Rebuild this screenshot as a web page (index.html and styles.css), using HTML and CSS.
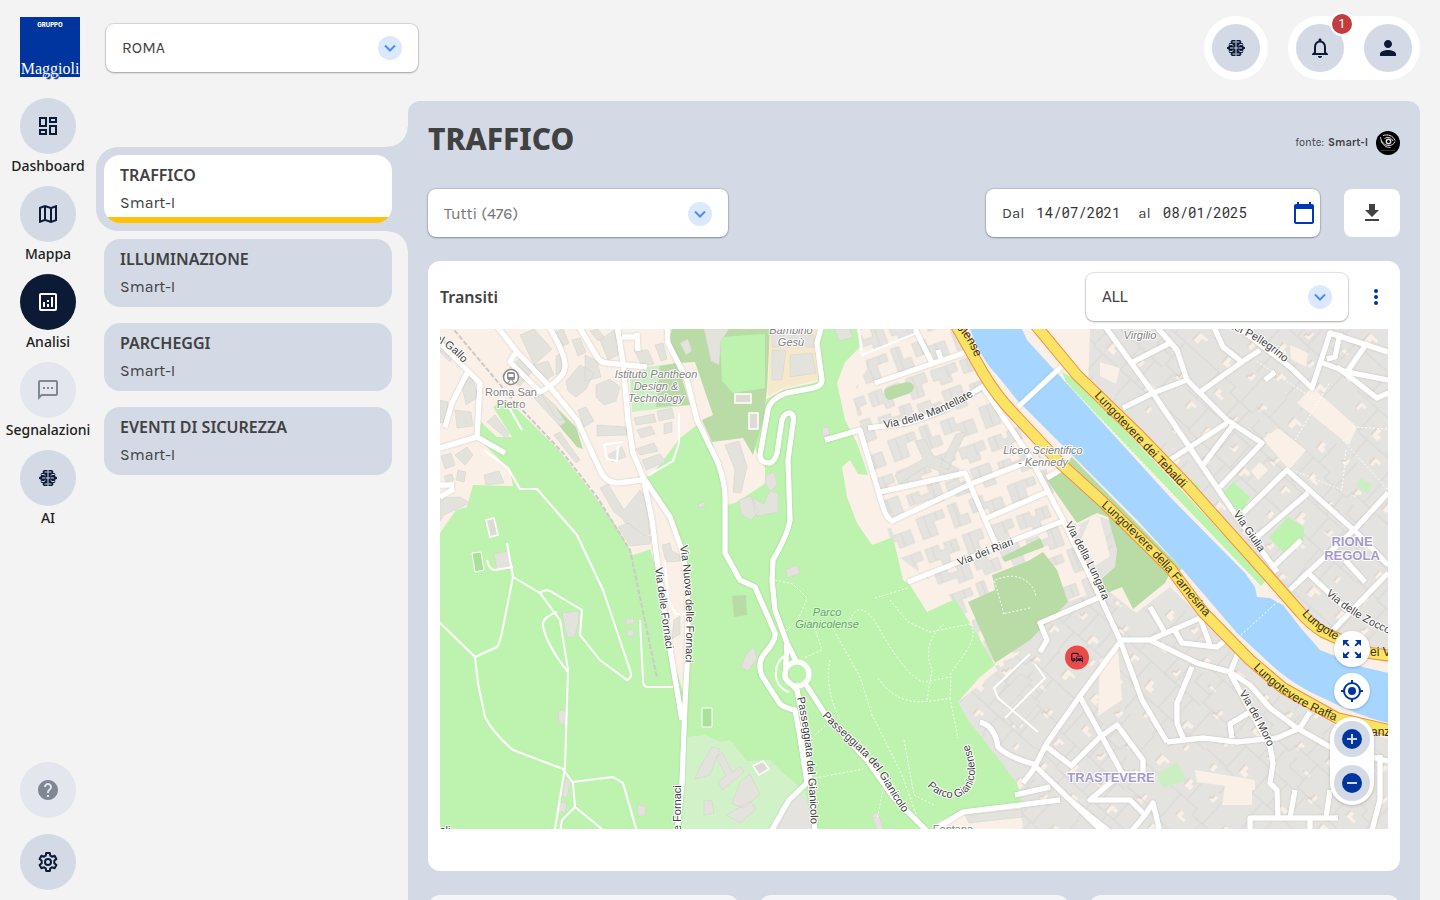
FILE: index.html
```html
<!DOCTYPE html>
<html lang="it">
<head>
<meta charset="utf-8">
<meta name="viewport" content="width=device-width, initial-scale=1">
<title>Traffico</title>
<link rel="stylesheet" href="styles.css">
</head>
<body>
<svg class="defs" aria-hidden="true">
  <symbol id="i-brain" viewBox="0 0 24 24">
    <path fill="currentColor" d="M11.500 4H8L6.500 5.500 7 7H5.500L4.500 9l.8 1L3 11.300v1.400L5.300 14l-.8 1 1 2H7l-.5 1.500L8 20h3.500zM12.500 4H16l1.500 1.500L17 7h1.500l1 2-.8 1L21 11.300v1.400L18.700 14l.8 1-1 2H17l.5 1.500L16 20h-3.500z"/>
    <path class="brain-fold" d="M5.500 8.500h2.500l1.500 1.300M8.500 6h3M6 12h3.500M5.500 15.500h2.500l1.500-1.300M8.500 18h3M18.500 8.500H16l-1.500 1.300M15.500 6h-3M18 12h-3.500M18.500 15.500H16l-1.500-1.300M15.500 18h-3M10 12h4"/>
  </symbol>
  <symbol id="i-chevron" viewBox="0 0 24 24">
    <circle cx="12" cy="12" r="12" fill="#dce8fd"/>
    <path d="M7 9.500l5 5 5-5" fill="none" stroke="#4d8df6" stroke-width="2"/>
  </symbol>
</svg>

<div class="app">
  <aside class="rail">
    <a class="logo" href="#" aria-label="Gruppo Maggioli">
      <svg viewBox="0 0 60 64" width="60" height="64">
        <path fill="#0035a0" d="M0 1h60v60H0z"/>
        <circle cx="28.500" cy="60.500" r="3" fill="#0035a0" stroke="#f3f3f3" stroke-width=".6"/>
        <circle cx="36" cy="60.500" r="3" fill="#0035a0" stroke="#f3f3f3" stroke-width=".6"/>
        <text class="logo-small" x="30" y="11">GRUPPO</text>
        <text class="logo-name" x="30" y="58">Maggioli</text>
      </svg>
    </a>
    <nav class="nav">
      <a class="nav-item" href="#"><span class="disc"><svg viewBox="0 0 24 24"><path fill="currentColor" d="M19 5v2h-4V5h4M9 5v6H5V5h4m10 8v6h-4v-6h4M9 17v2H5v-2h4M21 3h-8v6h8V3zM11 3H3v10h8V3zm10 8h-8v10h8V11zm-10 4H3v6h8v-6z"/></svg></span>Dashboard</a>
      <a class="nav-item" href="#"><span class="disc"><svg viewBox="0 0 24 24"><path fill="currentColor" d="M20.500 3l-.16.03L15 5.100 9 3 3.360 4.900c-.21.070-.36.250-.36.480V20.500c0 .28.220.5.500.5l.16-.03L9 18.900l6 2.100 5.640-1.900c.21-.07.360-.25.360-.48V3.500c0-.28-.22-.5-.5-.5zM10 5.470l4 1.400v11.660l-4-1.400V5.470zm-5 .99l3-1.010v11.700l-3 1.160V6.460zm14 11.080l-3 1.010V6.860l3-1.160v11.840z"/></svg></span>Mappa</a>
      <a class="nav-item current" href="#" aria-current="page"><span class="disc"><svg viewBox="0 0 24 24"><path fill="currentColor" d="M19 3H5c-1.100 0-2 .9-2 2v14c0 1.100.9 2 2 2h14c1.100 0 2-.9 2-2V5c0-1.100-.9-2-2-2zm0 16H5V5h14v14zM7 12h2v5H7zM15 7h2v10h-2zM11 14h2v3h-2zM11 10h2v2h-2z"/></svg></span>Analisi</a>
      <a class="nav-item" href="#"><span class="disc dim"><svg viewBox="0 0 24 24"><path fill="currentColor" d="M20 2H4c-1.100 0-2 .9-2 2v18l4-4h14c1.100 0 2-.9 2-2V4c0-1.100-.9-2-2-2zm0 14H5.200L4 17.200V4h16v12zM7 9h2v2H7zM11 9h2v2h-2zM15 9h2v2h-2z"/></svg></span>Segnalazioni</a>
      <a class="nav-item" href="#"><span class="disc"><svg><use href="#i-brain"/></svg></span>AI</a>
    </nav>
    <div class="rail-foot">
      <button class="disc dim" aria-label="Aiuto"><svg viewBox="0 0 24 24"><path fill="currentColor" d="M12 2C6.480 2 2 6.480 2 12s4.480 10 10 10 10-4.480 10-10S17.520 2 12 2zm1 17h-2v-2h2v2zm2.070-7.750l-.9.920C13.450 12.900 13 13.500 13 15h-2v-.5c0-1.100.45-2.100 1.170-2.830l1.240-1.260c.37-.36.590-.86.590-1.410 0-1.100-.9-2-2-2s-2 .9-2 2H8c0-2.210 1.790-4 4-4s4 1.790 4 4c0 .88-.36 1.680-.93 2.250z"/></svg></button>
      <button class="disc" aria-label="Impostazioni"><svg viewBox="0 0 24 24" fill="none" stroke="currentColor" stroke-width="2" stroke-linejoin="round"><path d="M10.200 3h3.600l.5 2.700 1.700 1 2.600-.9 1.800 3.100-2.100 1.800v2.600l2.100 1.800-1.800 3.100-2.600-.9-1.700 1-.5 2.700h-3.600l-.5-2.700-1.700-1-2.600.9-1.800-3.100 2.100-1.800v-2.600L3.600 8.900l1.800-3.100 2.600.9 1.700-1z"/><circle cx="12" cy="12" r="3"/></svg></button>
    </div>
  </aside>

  <div class="page">
    <header class="topbar">
      <div class="select city"><select aria-label="Comune"><option>ROMA</option></select><svg><use href="#i-chevron"/></svg></div>
      <div class="tools">
        <div class="pill"><button class="disc tool" aria-label="AI"><svg><use href="#i-brain"/></svg></button></div>
        <div class="pill">
          <button class="disc tool" aria-label="Notifiche"><svg viewBox="0 0 24 24"><path fill="currentColor" d="M12 22c1.100 0 2-.9 2-2h-4c0 1.100.9 2 2 2zm6-6v-5c0-3.070-1.630-5.640-4.500-6.320V4c0-.83-.67-1.500-1.500-1.500s-1.500.67-1.500 1.500v.68C7.640 5.360 6 7.920 6 11v5l-2 2v1h16v-1l-2-2zm-2 1H8v-6c0-2.480 1.510-4.500 4-4.500s4 2.020 4 4.500v6z"/></svg><span class="badge">1</span></button>
          <button class="disc tool" aria-label="Profilo"><svg viewBox="0 0 24 24"><path fill="currentColor" d="M12 12c2.210 0 4-1.790 4-4s-1.790-4-4-4-4 1.790-4 4 1.790 4 4 4zm0 2c-2.670 0-8 1.340-8 4v2h16v-2c0-2.660-5.330-4-8-4z"/></svg></button>
        </div>
      </div>
    </header>

    <div class="body">
      <nav class="topics" aria-label="Analisi">
        <a class="topic active" href="#"><span class="topic-card"><b>TRAFFICO</b><span>Smart-I</span></span></a>
        <a class="topic" href="#"><span class="topic-card"><b>ILLUMINAZIONE</b><span>Smart-I</span></span></a>
        <a class="topic" href="#"><span class="topic-card"><b>PARCHEGGI</b><span>Smart-I</span></span></a>
        <a class="topic" href="#"><span class="topic-card"><b>EVENTI DI SICUREZZA</b><span>Smart-I</span></span></a>
      </nav>

      <main class="panel">
        <div class="title-row">
          <h1>TRAFFICO</h1>
          <p class="source">fonte: <b>Smart-I</b>
            <svg viewBox="0 0 24 24" width="24" height="24"><circle cx="12" cy="12" r="12"/><g fill="none" stroke="#ddd"><circle cx="12.500" cy="10.500" r="2.200" stroke-width="1.400"/><path d="M4.500 6c.5 5 4 8.500 8.500 8.500 3 0 5-1.500 6-4M7 4.500c5-1.500 10 0 12 5M5 9.500c1.500 4.500 5 7 9.500 7M8.500 7.500c3-2 7-1 8.500 2.500"/><path d="M5 19.500h14" stroke="#555" stroke-width=".6"/></g></svg>
          </p>
        </div>

        <div class="filters">
          <div class="select all"><select aria-label="Sensori"><option>Tutti (476)</option></select><svg><use href="#i-chevron"/></svg></div>
          <div class="filters-end">
            <div class="dates">
              <label for="from">Dal</label><input id="from" type="text" value="14/07/2021">
              <label for="to">al</label><input id="to" type="text" value="08/01/2025">
              <button aria-label="Calendario"><svg viewBox="0 0 24 24" width="24" height="24"><path fill="#0038b8" d="M20 3h-1V1h-2v2H7V1H5v2H4c-1.100 0-2 .9-2 2v16c0 1.100.9 2 2 2h16c1.100 0 2-.9 2-2V5c0-1.100-.9-2-2-2zm0 18H4V8h16v13z"/></svg></button>
            </div>
            <button class="download" aria-label="Scarica"><svg viewBox="0 0 24 24" width="24" height="24"><path fill="#414141" d="M19 9h-4V3H9v6H5l7 7 7-7zM5 18v2h14v-2H5z"/></svg></button>
          </div>
        </div>

        <section class="card">
          <div class="card-head">
            <h2>Transiti</h2>
            <div class="card-tools">
              <div class="select kind"><select aria-label="Tipo di veicolo"><option>ALL</option></select><svg><use href="#i-chevron"/></svg></div>
              <button class="more" aria-label="Altro"><svg viewBox="0 0 24 24" width="24" height="24"><g fill="#0035a0"><circle cx="12" cy="6" r="2"/><circle cx="12" cy="12" r="2"/><circle cx="12" cy="18" r="2"/></g></svg></button>
            </div>
          </div>

          <div class="map">
            <svg class="map-canvas" viewBox="440 329 948 500" preserveAspectRatio="xMidYMid slice" role="img" aria-label="Mappa di Roma">
              <defs>
                <pattern id="dense" width="127" height="113" patternUnits="userSpaceOnUse" patternTransform="rotate(42)">
                  <path fill="#e4e3df" d="M0 0h127v113H0z"/>
                  <path fill="#faf0e7" d="M8 8h5v4h3v5H8zM38 4h4v7h-6v-3h2zM66 20h6v3h-2v5h-4zM98 9h11v3h-5v7h-6zM22 38h5v4h6v3H22zM54 47h3v8h-6v-3h3zM88 38h8v3h-8zM112 50h4v9h-7v-3h3zM10 66h8v3h-4v5h-4zM40 74h5v5h4v5h-9zM73 68h4v7h-7v-2h3zM94 80h9v4h-5v5h-4zM16 94h5v7h-5zM58 98h8v3h-4v5h-4zM110 98h4v6h-4z"/>
                  <path fill="none" stroke="#d9d8d3" d="M0 26h34v8h30v-8h63M20 0v26M48 0v34M80 0v26M94 26v30h33M0 60h46v-26M46 60h48M12 26v34M28 60v30h36V60M0 88h28M64 90h63M84 60v30M106 56v34M40 90v23M78 90v23M98 90v23M60 34v26M74 34v12h20"/>
                  <path fill="none" stroke="#d3c8bd" d="M8 8v9M38 4v4h-2v3M66 20v8M98 9v10M22 38v7M54 47v5h-3v3M88 38v3M112 50v6h-3v3M10 66v8M40 74v10M73 68v5h-3M94 80v9M16 94v7M58 98v8M110 98v6"/>
                </pattern>
                <pattern id="loose" width="97" height="83" patternUnits="userSpaceOnUse" patternTransform="rotate(-20)">
                  <path fill="#faf0e7" d="M0 0h97v83H0z"/>
                  <path fill="#e4e3df" stroke="#d6d2cb" stroke-width=".6" d="M2 3h14v6h6V3h13v12H23v8h-9v-6H2zM42 2h20v10h-7v12H42zM68 3h26v9h-8v8H74v-6h-6zM3 29h13v5h10v-8h12v20H23v-6H3zM44 30h14v5h10v12H50v-7h-6zM72 26h20v22H80v-8h-8zM4 54h28v8H20v14H4zM38 52h9v14h8v10H38zM60 54h14v8h18v14H76v-8H60z"/>
                  <path fill="none" stroke="#d9d8d3" d="M9 3v14M29 3v12M49 2v22M84 3v12M30 26v20M8 29v11M61 35v12M80 26v14M12 54v22M24 54v8M44 52v24M82 62v14M68 54v14"/>
                </pattern>
                <path id="l-gallo" d="M434 340Q454 350 468 370"/>
                <path id="l-mant" d="M884 428Q930 422 977 394"/>
                <path id="l-riari" d="M959 566L1018 543"/>
                <path id="l-teb" d="M1094 396L1190 497"/>
                <path id="l-farn" d="M1101 506Q1150 550 1180 587T1214 624"/>
                <path id="l-lungara" d="M1065 524C1078 550 1092 570 1105 606"/>
                <path id="l-giulia" d="M1233 514L1264 559"/>
                <path id="l-raf" d="M1253 668Q1290 706 1342 723"/>
                <path id="l-lun2" d="M1302 614Q1315 630 1342 643"/>
                <path id="l-zocco" d="M1326 594Q1350 618 1396 637"/>
                <path id="l-moro" d="M1239 693Q1256 720 1271 753"/>
                <path id="l-nuova" d="M680 546Q689 600 685 670"/>
                <path id="l-forn" d="M655 568L667 656"/>
                <path id="l-forn2" d="M681 836L681 774"/>
                <path id="l-pas1" d="M797 698Q809 750 811 834"/>
                <path id="l-pas2" d="M822 716C842 738 868 756 880 776S898 807 908 819"/>
                <path id="l-parco" d="M927 786C946 806 974 800 975 772Q975 758 967 740"/>
                <path id="l-pell" d="M1228 328Q1262 340 1294 371"/>
                <path id="l-lense" d="M956 328Q970 340 978 366"/>
              </defs>

              <path fill="#faf0e7" d="M0 0h1900v1200H0z"/>
              <path fill="url(#loose)" d="M860 329h98l25 50 60 80 20 60 45 90-30 60-40 30-30-10-20-35-40-60-53-40-25-80-10-50-8-30 15-25z"/>
              <g fill="url(#dense)">
                <path d="M1090 329h298v320h-30l-40-20-60-62-140-150-30-30z"/>
                <path d="M958 702l60-48 28-45 60-20 30 24 34-26 55 52 50 50 60 36 53 14v90H1023l-5-45-50-60z"/>
                <path d="M1062 520l16 5 20-10 12 6 7 30-2 16-15 12-20-20z"/>
              </g>

              <path class="park" d="M440 533 456 510 467 507 473 485 513 486 510 470 493 453 485 445 480 437 481 422 497 437 512 437 493 407 505 398 518 410 557 448 590 490 617 527 633 555 650 549 643 478 652 475 680 438 697 425 712 442 722 480 726 505 735 503 760 487 765 483 765 467 757 453 753 440 765 400 783 390 818 382 820 329 857 329 860 347 845 362 837 383 845 420 857 443 863 460 868 475 858 474 850 460 842 467 847 497 857 523 872 545 893 537 903 580 910 585 927 612 955 599 970 623 995 665 980 677 958 702 968 720 997 757 1017 783 1023 803 963 810 937 823 937 829 440 829z"/>
              <path fill="#faf0e7" d="M643 477l24 40 20 50-1 60-3 65-12-40-14-82-7-21-17 6-22-38 10-40z"/>
              <path fill="#d1f2c8" d="M687 737l18-2 15 7 10-2 17 21 23-1 13 13 22 18 8 38H682z"/>
              <path fill="#e4e3df" d="M787 800l19-4 7 33h-38z"/>
              <g class="garden">
                <path d="M672 329h98l-3 61-4 30-10 35-10-17-31 4-10-22 11-5-18-53-18 1-9-16z"/>
                <path d="M1047 480l13-12 20 20 70 60 20 25-5 10-32 26-11-22-15 6-7-13 15-13 2-17-9-33-11-4-20 10z"/>
                <path d="M992 575l38-15 13-8 14 18 11 32-38 38-35 23-27-61 27-12z"/>
                <path d="M1002 557l38-19 4 9-39 15zM549 412l7-5 20 20 7 22-6-2-20-24z"/>
                <path d="M884 391q1-3 5-4l17-5q7 0 8 5-1 5-6 7l-18 6q-5 0-6-9z"/>
                <path d="M1072 457l110 112-6 5-112-110zM732 596l14-1 1 20-13 2zM1085 812l8 2 14 15h-7z"/>
              </g>
              <g class="park">
                <path d="M720 337l45-3v54l-32 5-11-12z"/>
                <path d="M1062 372l18 10 186 198-5 6-194-202zM1233 482l17 15-10 18-17-22zM1288 517l16 10-1 14-20 11-14-15z"/>
                <path d="M1160 448l10 10-5 8-10-10zM1190 480l10 6-4 10-8-8z"/>
              </g>
              <path fill="#cbefc2" d="M630 375l17-8 30-4 13 42-58 7z"/>
              <path class="garden-fill" d="M660 366l17-3 13 42-34 2z"/>
              <path fill="#cbefc2" d="M1157 774l20-12 10 18-24 8zM1360 478l12 6-4 10-12-8z"/>
              <path fill="#f6e8ca" d="M770 329h47l1 51-35 8-15 8z"/>
              <g fill="#faf0e7">
                <path d="M1312 387l45 40-8 18-52-42zM1278 428l28 22-17 20-26-31zM1260 462l8 8-10 10-7-9zM1290 345l18 8-2 14-15-8zM1100 362l20 6-4 16-16-8zM1225 785h27v20h-30zM1092 515l8 3 10 38-15 10-15-25z"/>
                <path d="M1240 600l14-5 18 4 20 30 30 22 66 12v10l-80-10-40-34zM1100 660l18-10 4 50-24 16zM1195 770l60 10v10l-58-8z"/>
              </g>

              <g class="building">
                <path d="M520 335l14-6 18 20-18 16zM534 365l14-4 6 14-10 6zM566 381l14-16 14 8-8 16-10 8-8-6zM585 355l12 6 4 16-16 4zM600 340l14-10 6 24-12 6zM634 350h14l6 14-12 2zM655 345l8-2 4 16-6 2zM596 385l14-6 10 8-4 14-12 4-8-8zM597 425l30 2v8l-30 1zM634 418l20-4 2 8-20 3zM657 411l15-3 2 10-15 3zM637 430l14-4 4 8-14 4zM664 424l8-2v10l-8 2zM636 449l18-6 4 8-18 4zM642 460l18-6 6 8-20 8zM608 455l14-8 4 10-14 5zM578 410l8-3 8 14-10 6zM600 488l8-4 16 26 16-20 6 8 4 36-14 6-14-22-8-6zM662 545l8-2 2 8 8 4v6l-14 1zM484 475l15-4 5 12-18 2zM487 422l8-7 14 18-2 6zM462 385l10-10 6 22-12 8zM455 410l16 2 2 14-16 2zM440 498l20-1 10 6-26 12-4 6zM455 455l12-8 6 8-8 10zM444 340l12 10-6 12-10-10zM502 376l18-18 12 14-12 14z"/>
                <path d="M555 332l8-3 6 14-8 4zM572 340l8-2 6 14-8 4zM590 331l8-2 6 8-6 4zM556 356l6-3 2 16-8 6zM534 398l8-4 24 28-6 4zM440 400l8 2-2 20-6 1zM441 456l10-3 4 12-10 4zM458 470l8 2-2 10-8-2zM444 476l8-2 2 6-8 2zM618 527l10-4 18 14 6-1-2 8-20 2zM680 343l8-4 4 12-6 4z"/>
                <path d="M540 392l14 12 10 16-8-2zM560 432l20 28-4 3-22-28zM494 554l14-3 3 18-14 1zM562 613l17-2-1 14-4 12h-7zM558 710l9 1v13h-8zM565 779l6 1-4 18-5-2zM559 802l8 1-2 9h-7zM638 805l8 1-1 10h-7zM626 619h8v5h-8zM627 630h7v6h-7zM700 767l12-20 8 2-10 26-15 4zM716 757l6-5 10 20 8-6 4 6-22 18-4-8 8-6zM740 782l10-8 10 20-16 14-12-4zM726 815l24-14 6 8-16 14zM704 800l8 1 2 12-10 2zM674 620l6-4v18l-8 5zM746 655l8-8 3 12-9 12-7-4zM766 475l8-3 3 12-6 8-6-8zM770 490l8 4v18l-22 4-4-18 12 6zM785 570l12-5 3 8-12 5zM822 428l7-1v8l-6 2zM698 504l6-2 1 4-6 2zM725 445l14-4 8 26-6 26-8-1 2-22zM739 500l12-4 8 16-8 8-10-6zM704 329h25l-8 12-2 24-8-4zM772 335h42v12h-42zM772 350h14l-4 30h-10zM790 355l22-2 4 20-26 4zM872 815l6-3 6 20h-7z"/>
                <path d="M895 475l28-16-8-18 10-2 8 16 26 14-4 9-28-12-28 18zM940 466l16-32 10-2-18 38zM995 700l25-26 12 6-24 28zM1008 718l22-24 10 8-22 26zM965 815l56-6 2 8-54 6zM835 329h14l4 8-14 4z"/>
              </g>
              <g fill="#dedbd7" stroke="#fff" stroke-width="1.500"><path d="M735 394h16v9h-16zM749 413h9v16h-9zM486 520l8-2 4 17-8 2zM753 766l10-5 6 8-10 6z"/></g>
              <g fill="#abe09c" stroke="#fff" stroke-width="1"><path d="M472 553l9-1 3 18-9 2zM702 708h10v19h-10z"/></g>

              <path fill="#a6d6ff" d="M970 329c8 20 15 34 27 46l20 25 53 53 67 67 46 50 54 63 40 37c15 12 28 20 46 28 24 12 45 20 65 25v-50l-25-6-43-17-20-23-17-22-13-7-13-1-2-10-10-14-75-76-100-110-43-47-5-11z"/>
              <g class="dots">
                <path d="M1241 635l42-38M1064 380l196 206M1066 463l114 113"/>
                <path d="M775 580l18 4 14 14-8 20-14 14-2 8M812 620l10 30-18 8M832 627l28 50 12 38 30 60 18 50M850 620c8-20 20-8 30 10s30 50 45 52l25-5M875 598l20-6 12-4M890 600l18 22 22 10 40-8M927 700l5-30c-8-20-2-34 12-46M878 678c20 28 40 26 72 20l1-24M950 698l8 40M815 735l20-18M830 660c-4 20 0 40 10 60M970 624c10 14-6 30-20 50M992 582c20-12 40-4 44 14M1004 614l-10-35M1030 608l-28 6M1315 400l-60-40M1292 470l50 20 4-40M1343 440l45 50M1295 440l35-58M885 780l-8 40M815 778l48-9M904 740l10 55 20 10M1353 427l35 2"/>
              </g>

              <g class="street-case"><use href="#streets"/></g>
              <g class="street" id="streets">
                <path d="M617 325l6 38 5 57 5 33 10 24 27 40 13 36q5 34 5 67l-1 47-2 36-3 80-5 50"/>
                <path d="M643 477l9 43 6 47 10 70 14 83M496 325l21 27 33 35 27 33 23 50q5 12 17 13l26-3M548 325q18 30 17 42t-25 25l-30-30 7-12M578 325l19 32q4 6 10 6l40 4"/>
                <path d="M667 325l1 18 19 37 10 40 21 43q7 20 7 34v56l15 27 15 7 20 46q1 8-11 21-7 10-2 22l18 28q5 4 15 6l5 27 7 46-18 17-20 35"/>
                <path d="M822 325l-5 18 5 37q0 6-9 8l-26 5q-17 6-19 17l-8 45q0 8 10 8 5-2 7-10l5-33q2-7 8-7 5 2 3 10l-5 37 2 60q-2 14-17 40l-1 20 3 30 12 33 10 20M787 643l-2 35 12 12 6 30 10 83 2 29M805 683l22 34 40 43 26 37 34 34"/>
                <path d="M440 448l37-11 28 16M477 437l3-54-13-13-30-30M467 373l-15 30-7 24M440 485h14M440 497l14-8M622 337h14M637 333l1 18"/>
                <path d="M875 383l92-31M915 329l17 34M868 428l39-5q26-8 43-16l35-22M825 440l35-10 23 77q4 12 9 14l81-38 54-21M880 492l85-19 32 74M987 518l60-26M983 387l47 70 33 63 40 83 17 37 22 60 25 42M908 582l155-61M1047 478l15-9M938 350l4 12"/>
                <path d="M1018 407l44-41M1100 597l-60 26 7 17-7 12M1120 642l-40 54-33 47-14 27-10 13M980 722q15 4 18 25 10 10 35 17l70 68M937 828l26-16 97-12M1047 747l26 20M1015 795l35-8"/>
                <path d="M1120 640h30l47 23 33 9 20 13 20 23 27 20 33 19 58 14M1150 640l50-22 10 27M1173 627l9 16 35 4 13-10M1192 667l-15 36v20l6 15M1167 742l36-4 34 4 40-4 23-10 10-16M1230 673l40 74 3 16-3 20 7 7 1 28M1250 832v-14h88M1310 818v14M1230 673l8-20M1232 738l-2-14 20-12"/>
                <path d="M1080 697l42 76-32 27h40l15 15-14 17M1070 767l30-30 17-12 26 35v14h-21M1145 815l8-12 7 29M1330 790l-4 28M1295 790l-5 28M1380 755v45l-8 30M1150 607l14 24M1070 800l40 32"/>
                <path d="M1104 325l49 68 37 55 47 69 40 55M1155 325l22 25 10 30 40 40 35 23-42 44M1213 325l10 22 19 15-42 30M1123 408l30-15 34-13M1133 362l37-19M1242 362l18-12M1170 460l57-37M1203 465l30-40M1243 513l44-43 70 63M1257 537l51-44M1235 325l55 42 22 21 18-55 58 19M1323 363l24 9 41 8M1347 372l20-29M1337 367l40 31 11-5"/>
                <path d="M1273 567l28-27M1300 580l57-53 31-34M1333 630l55-57M1290 590l18-17 40 38M1357 533l31 32M1345 560l20 22M1275 372l-10 8M1340 333l-5 24-8 2"/>
              </g>
              <circle class="roundabout" cx="797" cy="674" r="12"/>
              <g class="lane">
                <path d="M436 619l39 38 3 26 7 34q8 16 28 33l50 19 10 14 2 24 27 22M475 657l22-10q3-4 6-20l10-50-6-34M513 577l27 16 20 27 8 50-3 97-10 62M540 593q4-4 10-2l32 19-2 25 20 25 27 20q6-2 3-10l-27-80-26-55-40-46h-17l-12-21-23-17"/>
                <path d="M557 612q-16 6-14 14 4 20 25 46M572 782l41-5 10 6 14 49M575 807l-13 13-2 12M640 620l3 60q0 7 5 7h25M487 560q2 10 8 10l18-3M679 413v30l-6 18-24 14M603 445l20-3M858 325l4 30 55-22M785 656c-12 6-14 30 4 36M500 392l22 38M665 560l3 40 8 14h10M604 445l3 14 10 2 1-16M1030 654l-36 34 4 10 40 34M1035 664l10 14-40 40"/>
              </g>
              <path class="rail-line" d="M450 325l63 75 50 53 34 44 33 53 27 128"/>

              <g class="trunk-case"><use href="#trunk-a"/><use href="#trunk-b"/></g>
              <g class="trunk">
                <path id="trunk-a" d="M954 322l29 51q14 24 34 44l43 46 43 39 67 66 33 44 47 48 33 28 54 30 60 14"/>
                <path id="trunk-b" d="M1033 322l44 53 60 58 50 52 76 85 37 42q10 12 23 20l47 21 28 4"/>
              </g>

              <g class="road-name">
                <text><textPath href="#l-gallo">el Gallo</textPath></text>
                <text><textPath href="#l-mant">Via delle Mantellate</textPath></text>
                <text><textPath href="#l-riari">Via dei Riari</textPath></text>
                <text><textPath href="#l-lungara">Via della Lungara</textPath></text>
                <text><textPath href="#l-giulia">Via Giulia</textPath></text>
                <text><textPath href="#l-zocco">Via delle Zocco</textPath></text>
                <text><textPath href="#l-moro">Via del Moro</textPath></text>
                <text><textPath href="#l-nuova">Via Nuova delle Fornaci</textPath></text>
                <text><textPath href="#l-forn">Via delle Fornaci</textPath></text>
                <text><textPath href="#l-forn2">lle Fornaci</textPath></text>
                <text><textPath href="#l-pas1">Passeggiata del Gianicolo</textPath></text>
                <text><textPath href="#l-pas2">Passeggiata del Gianicolo</textPath></text>
                <text><textPath href="#l-parco">Parco Gianicolense</textPath></text>
                <text><textPath href="#l-pell">del Pellegrino</textPath></text>
                <text x="437" y="834">ioli</text>
              </g>
              <g class="trunk-name">
                <text><textPath href="#l-teb">Lungotevere dei Tebaldi</textPath></text>
                <text><textPath href="#l-farn">Lungotevere della Farnesina</textPath></text>
                <text><textPath href="#l-raf">Lungotevere Raffa</textPath></text>
                <text><textPath href="#l-lun2">Lungote</textPath></text>
                <text><textPath href="#l-lense">olense</textPath></text>
                <text x="1370" y="656">ei V</text>
                <text x="1371" y="736">anz</text>
              </g>
              <g class="place">
                <text x="511" y="396">Roma San</text><text x="511" y="408">Pietro</text>
                <text x="953" y="833">Fontana</text>
                <g font-style="italic">
                  <text x="656" y="378">Istituto Pantheon</text><text x="656" y="390">Design &amp;</text><text x="656" y="402">Technology</text>
                  <text x="791" y="334">Bambino</text><text x="791" y="346">Gesù</text>
                  <text x="1043" y="454">Liceo Scientifico</text><text x="1043" y="466">- Kennedy</text>
                  <text x="1140" y="339">Virgilio</text>
                  <text class="green" x="827" y="616">Parco</text><text class="green" x="827" y="628">Gianicolense</text>
                </g>
              </g>
              <g class="district"><text x="1352" y="546">RIONE</text><text x="1352" y="560">REGOLA</text><text x="1111" y="782">TRASTEVERE</text></g>
              <g><circle cx="511" cy="377" r="7.500" fill="#fff" stroke="#8b8b8b" stroke-width="1.500"/><rect x="507" y="372" width="8" height="8" rx="2" fill="#8b8b8b"/><path fill="#fff" d="M508.500 374h5v3h-5z"/><path stroke="#8b8b8b" d="M508 383l2-3M514 383l-2-3"/></g>
              <g><circle cx="1077" cy="657.500" r="12" fill="#ea4a48"/><g transform="translate(1070 650.500) scale(.59)"><path fill="#1b1a35" d="M12 4H5C3.340 4 2 5.340 2 7v8c0 1.660 1.340 3 3 3l-1 1v1h1l2-2.030L9 18v-5H4V5.980L13 6v2h2V7c0-1.660-1.340-3-3-3zM5 14c.55 0 1 .45 1 1s-.45 1-1 1-1-.45-1-1 .45-1 1-1zm15.570-4.340c-.14-.4-.52-.66-.97-.66h-7.190c-.46 0-.83.26-.98.660L10 13.770l.01 5.510c0 .38.310.72.690.72h.62c.38 0 .68-.38.680-.76V18h8v1.240c0 .38.310.76.690.76h.61c.38 0 .69-.34.690-.72l.01-1.370v-4.140l-1.430-4.110zM12.410 10h7.190l1.030 3h-9.250l1.030-3zM12 16c-.55 0-1-.45-1-1s.45-1 1-1 1 .45 1 1-.45 1-1 1zm8 0c-.55 0-1-.45-1-1s.45-1 1-1 1 .45 1 1-.45 1-1 1z"/></g></g>
            </svg>

            <div class="map-tools">
              <button class="map-btn" aria-label="Schermo intero"><svg viewBox="0 0 24 24" width="24" height="24"><path fill="#0035a0" d="M15 3h6v6l-2.300-2.300-2.870 2.890-1.420-1.420 2.890-2.870L15 3zM3 9V3h6L6.700 5.300l2.890 2.870-1.420 1.420L5.300 6.700 3 9zm6 12H3v-6l2.300 2.300 2.870-2.890 1.420 1.420L6.700 18.700 9 21zm12-6v6h-6l2.300-2.300-2.890-2.870 1.420-1.420 2.870 2.890L21 15z"/></svg></button>
              <button class="map-btn" aria-label="La mia posizione"><svg viewBox="0 0 24 24" width="24" height="24"><g fill="none" stroke="#0035a0" stroke-width="2"><circle cx="12" cy="12" r="8"/><path d="M12 1v3M12 20v3M1 12h3M20 12h3"/></g><circle cx="12" cy="12" r="4" fill="#0035a0"/></svg></button>
              <div class="zoom">
                <button aria-label="Ingrandisci"><svg viewBox="0 0 24 24" width="24" height="24"><circle cx="12" cy="12" r="10" fill="#0035a0"/><path d="M7 12h10M12 7v10" stroke="#d3d9e5" stroke-width="2"/></svg></button>
                <button aria-label="Riduci"><svg viewBox="0 0 24 24" width="24" height="24"><circle cx="12" cy="12" r="10" fill="#0035a0"/><path d="M7 12h10" stroke="#d3d9e5" stroke-width="2"/></svg></button>
              </div>
            </div>
          </div>
        </section>

        <div class="stats"><section></section><section></section><section></section></div>
      </main>
    </div>
  </div>
</div>
</body>
</html>
```
FILE: styles.css
```css
* { box-sizing: border-box; }
body {
  margin: 0;
  background: #f3f3f3;
  color: #414141;
  font: 16px/24px Karla, Inter, "Liberation Sans", sans-serif;
}
button, input, select { font: inherit; color: inherit; border: 0; padding: 0; margin: 0; background: none; }
button { cursor: pointer; display: grid; place-items: center; }
a { color: inherit; text-decoration: none; }
.defs { position: absolute; width: 0; height: 0; }

.app { display: flex; height: 100vh; overflow: hidden; }

/* navigation rail */
.rail { flex: 0 0 96px; display: flex; flex-direction: column; align-items: center; padding: 16px 0 10px; }
.logo { height: 82px; padding-left: 4px; }
.logo-small { font: 800 6px Inter, sans-serif; fill: #fff; text-anchor: middle; }
.logo-name { font: 16px "Liberation Serif", serif; fill: #fff; text-anchor: middle; }
.nav { display: flex; flex-direction: column; gap: 8px; }
.nav-item { display: flex; flex-direction: column; align-items: center; font: 500 14px/24px "Noto Sans", sans-serif; color: #212121; }
.disc { width: 56px; height: 56px; border-radius: 50%; background: #d3d9e5; color: #0b1a36; display: grid; place-items: center; position: relative; }
.disc svg { width: 24px; height: 24px; }
.disc.dim { background: #e3e6ed; color: #7f8795; }
.current .disc { background: #0c1a35; color: #fff; }
.brain-fold { fill: none; stroke: #d3d9e5; stroke-width: 1; }
.rail-foot { margin-top: auto; display: flex; flex-direction: column; gap: 16px; }

/* top bar */
.page { flex: 1; min-width: 0; display: flex; flex-direction: column; }
.topbar { display: flex; justify-content: space-between; align-items: center; padding: 16px 20px 0 10px; }
.tools { display: flex; gap: 20px; }
.pill { display: flex; gap: 20px; padding: 8px; border-radius: 32px; background: #fff; }
.tool { width: 48px; height: 48px; }
.badge { position: absolute; top: -12px; right: -10px; width: 24px; height: 24px; border: 2px solid #fff; border-radius: 50%; background: #c43c3e; color: #fff; font: 13px/20px Roboto, sans-serif; text-align: center; }

.select { display: grid; align-items: center; height: 48px; border-radius: 8px; background: #fff; box-shadow: 0 0 1px 1px rgba(0, 0, 0, .12), 0 1px 2px rgba(0, 0, 0, .25); }
.select select { grid-area: 1 / 1; width: 100%; height: 48px; padding: 0 48px 0 16px; appearance: none; }
.select svg { grid-area: 1 / 1; justify-self: end; width: 24px; height: 24px; margin-right: 16px; pointer-events: none; }
.city { width: 312px; }
.all { width: 300px; color: #757575; align-items: end; padding-bottom: 2px; }
.all select { height: 42px; }
.all svg { align-self: center; margin-top: 4px; }
.kind { width: 262px; font: 15px/24px Roboto, sans-serif; }

/* topic list */
.body { flex: 1; min-height: 0; display: flex; margin-top: 21px; padding-right: 20px; }
.topics { flex: 0 0 312px; padding-top: 46px; }
.topic { display: block; padding: 8px 16px 8px 8px; position: relative; }
.topic-card { display: flex; flex-direction: column; gap: 4px; height: 68px; padding: 8px 16px; border-radius: 16px; background: #d3d9e5; overflow: hidden; }
.topic-card b { font: 600 16px/24px "Noto Sans", sans-serif; }
.active { background: #d3d9e5; border-radius: 22px 0 0 22px; }
.active .topic-card { background: linear-gradient(#fff 62px, #ffc107 62px); }
.active::before, .active::after { content: ""; position: absolute; right: 0; width: 20px; height: 20px; }
.active::before { top: -20px; background: radial-gradient(circle at 0 0, transparent 19px, #d3d9e5 20px); }
.active::after { bottom: -20px; background: radial-gradient(circle at 0 100%, transparent 19px, #d3d9e5 20px); }

/* analysis panel */
.panel { flex: 1; min-width: 0; overflow: hidden; padding: 16px 20px 0; background: #d3d9e5; border-radius: 12px 12px 0 0; }
.title-row { display: flex; justify-content: space-between; align-items: center; height: 44px; }
h1 { margin: 0; font: 800 30px/44px "Noto Sans", sans-serif; }
.source { display: flex; align-items: center; gap: 4px; margin: 8px 0 0; font-size: 11px; }
.source svg { margin-left: 4px; }
.filters { display: flex; justify-content: space-between; margin-top: 28px; }
.filters-end { display: flex; gap: 24px; }
.dates { display: flex; align-items: center; width: 334px; height: 48px; padding: 0 4px 0 16px; border-radius: 8px; background: #fff; font-size: 15px; box-shadow: 0 0 1px 1px rgba(0, 0, 0, .12), 0 1px 2px rgba(0, 0, 0, .25); }
.dates input { width: 86px; margin: 0 16px 0 12px; font: 14px/24px "Roboto Mono", "Liberation Mono", monospace; color: #333; }
.dates button { margin-left: auto; }
.download { width: 56px; height: 48px; border-radius: 8px; background: #fff; }

.card { margin-top: 24px; padding: 12px 12px 42px; border-radius: 12px; background: #fff; }
.card-head { display: flex; justify-content: space-between; align-items: center; margin-bottom: 8px; }
h2 { margin: 0; font: 600 16px/24px "Noto Sans", sans-serif; }
.card-tools { display: flex; align-items: center; gap: 16px; }
.map { position: relative; }
.map-canvas { display: block; width: 100%; height: 500px; }
.map-tools { position: absolute; right: 14px; bottom: 24px; display: flex; flex-direction: column; align-items: center; gap: 6px; }
.map-btn { width: 36px; height: 36px; border-radius: 50%; background: #fff; box-shadow: 0 1px 3px rgba(0, 0, 0, .2); }
.zoom { display: flex; flex-direction: column; gap: 8px; margin-top: 2px; padding: 4px; border-radius: 22px; background: #fff; box-shadow: 0 1px 3px rgba(0, 0, 0, .2); }
.zoom button { width: 36px; height: 36px; border-radius: 50%; background: #d3d9e5; }
.stats { display: grid; grid-template-columns: repeat(3, 1fr); gap: 20px; margin-top: 24px; }
.stats section { height: 200px; border-radius: 12px; background: #f4f5f9; }

/* map drawing */
.park { fill: #bef2af; }
.garden, .garden-fill { fill: #b9dca6; }
.building { fill: #e3e2dd; stroke: #d4d0c9; stroke-width: .5; }
.street, .street-case, .trunk, .trunk-case, .lane { fill: none; stroke-linejoin: round; }
.street { stroke: #fff; stroke-width: 5; }
.street-case { opacity: .5; filter: drop-shadow(0 0 1px #999); }
.roundabout { fill: none; stroke: #fff; stroke-width: 5; }
.lane { stroke: #fff; stroke-width: 2; }
.rail-line { fill: none; stroke: #ccc9c9; stroke-width: 2; stroke-dasharray: 5 2; }
.dots { fill: none; stroke: #fff; stroke-width: 1; stroke-dasharray: 2 2; opacity: .9; }
.trunk { stroke: #fbe366; stroke-width: 10; }
.trunk-case { stroke: #f0913f; stroke-width: 12; }
.road-name, .trunk-name, .place, .district { font: 11px "Liberation Sans", sans-serif; paint-order: stroke; stroke-linejoin: round; }
.road-name { fill: #3c3c3c; stroke: #fff; stroke-width: 2; }
.trunk-name { font-size: 12px; fill: #3b3310; }
.place { fill: #828282; stroke: #fff; stroke-width: 2; text-anchor: middle; }
.place .green { fill: #5da865; stroke: #d7f7cd; }
.district { font-size: 13px; font-weight: bold; fill: #a698cb; stroke: #fff; stroke-width: 2; text-anchor: middle; }
```
